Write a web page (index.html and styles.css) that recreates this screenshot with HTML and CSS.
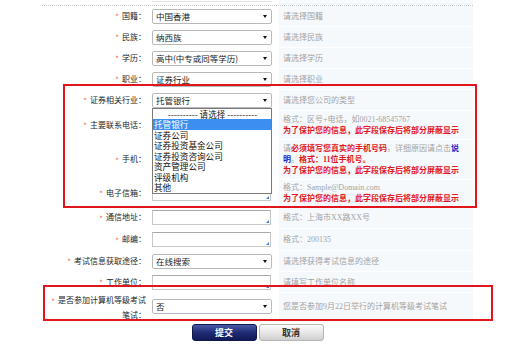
FILE: index.html
```html
<!DOCTYPE html>
<html lang="zh-CN">
<head>
<meta charset="utf-8">
<title>报名信息</title>
<link rel="stylesheet" href="styles.css">
</head>
<body>
<div class="page">
  <div class="form">
    <div class="row prev"><div class="lab"></div><div class="fld"><div class="stub"></div></div><div class="tip"></div></div>
    <div class="rows">
      <div class="row"><div class="lab"><label><i>*</i>国籍：</label></div><div class="fld"><div class="sel"><span>中国香港</span><b></b></div></div><div class="tip"><p>请选择国籍</p></div></div>
      <div class="row"><div class="lab"><label><i>*</i>民族：</label></div><div class="fld"><div class="sel"><span>纳西族</span><b></b></div></div><div class="tip"><p>请选择民族</p></div></div>
      <div class="row"><div class="lab"><label><i>*</i>学历：</label></div><div class="fld"><div class="sel"><span>高中(中专或同等学历)</span><b></b></div></div><div class="tip"><p>请选择学历</p></div></div>
      <div class="row"><div class="lab"><label><i>*</i>职业：</label></div><div class="fld"><div class="sel"><span>证券行业</span><b></b></div></div><div class="tip"><p>请选择职业</p></div></div>
      <div class="row"><div class="lab"><label><i>*</i>证券相关行业：</label></div><div class="fld"><div class="sel open"><span>托管银行</span><b></b>
        <ul class="menu">
          <li class="head">---------- 请选择 ----------</li>
          <li class="on">托管银行</li>
          <li>证券公司</li>
          <li>证券投资基金公司</li>
          <li>证券投资咨询公司</li>
          <li>资产管理公司</li>
          <li>评级机构</li>
          <li>其他</li>
        </ul></div></div><div class="tip"><p>请选择您公司的类型</p></div></div>
      <div class="row"><div class="lab"><label><i>*</i>主要联系电话：</label></div><div class="fld"><div class="inp"></div></div><div class="tip pad"><p>格式：区号+电话，如0021-68545767<br><em>为了保护您的信息，此字段保存后将部分屏蔽显示</em></p></div></div>
      <div class="row"><div class="lab"><label><i>*</i>手机：</label></div><div class="fld"><div class="inp"></div></div><div class="tip pad"><p>请<em>必须填写您真实的手机号码</em>，详细原因请点击<a href="#">说明</a>。<em>格式：11位手机号。</em><br><em>为了保护您的信息，此字段保存后将部分屏蔽显示</em></p></div></div>
      <div class="row"><div class="lab"><label><i>*</i>电子信箱：</label></div><div class="fld"><div class="inp"></div></div><div class="tip pad2"><p>格式：Sample@Domain.com<br><em>为了保护您的信息，此字段保存后将部分屏蔽显示</em></p></div></div>
      <div class="row tall"><div class="lab"><label><i>*</i>通信地址：</label></div><div class="fld"><div class="inp"></div></div><div class="tip"><p>格式：上海市XX路XX号</p></div></div>
      <div class="row tall"><div class="lab"><label><i>*</i>邮编：</label></div><div class="fld"><div class="inp"></div></div><div class="tip"><p>格式：200135</p></div></div>
      <div class="row"><div class="lab"><label><i>*</i>考试信息获取途径：</label></div><div class="fld"><div class="sel"><span>在线搜索</span><b></b></div></div><div class="tip"><p>请选择获得考试信息的途径</p></div></div>
      <div class="row"><div class="lab"><label><i>*</i>工作单位：</label></div><div class="fld"><div class="inp"></div></div><div class="tip"><p>请填写工作单位名称</p></div></div>
      <div class="row two"><div class="lab"><label><i>*</i>是否参加计算机等级考试笔试：</label></div><div class="fld"><div class="sel"><span>否</span><b></b></div></div><div class="tip"><p>您是否参加9月22日举行的计算机等级考试笔试</p></div></div>
    </div>
  </div>
  <div class="btns"><button class="btn submit">提交</button><button class="btn cancel">取消</button></div>
  <div class="mark mark-a"></div>
  <div class="mark mark-b"></div>
</div>
</body>
</html>
```

FILE: styles.css
```css
* { box-sizing: border-box; }
body {
  margin: 0;
  background: #fff;
  font: 8px/11px "Noto Sans CJK SC", "Liberation Sans", sans-serif;
  color: #222;
}
.page { position: relative; width: 512px; height: 347px; overflow: hidden; }
.form { margin-left: 42px; width: 431px; }
.rows {
  border-top: 1px dotted #c9c9c9;
  display: flex;
  flex-direction: column;
  gap: 1px;
}
.row {
  display: grid;
  grid-template-columns: 106px 131px 194px;
  min-height: 20px;
}
.row.tall { min-height: 21px; }
.row.two { min-height: 26px; }
.prev { min-height: 5px; height: 5px; }
.stub { width: 120px; height: 2px; border-bottom: 1px solid #e2e2e2; }
.lab {
  display: flex;
  align-items: center;
  justify-content: flex-end;
  text-align: right;
  padding: 0 2px 0 7px;
  color: #262626;
}
.lab label { line-height: 11px; }
.two .lab label { line-height: 13px; }
.lab i {
  font-style: normal;
  color: #ec6a6a;
  margin-right: 3px;
  vertical-align: -1.5px;
}
.fld { display: flex; align-items: center; padding-left: 4px; }
.prev .fld { align-items: flex-start; }
.tip {
  background: #f6f9fc;
  display: flex;
  align-items: center;
  padding: 0 12px 0 4px;
  color: #a3a3a3;
  font-family: "Liberation Serif", "Noto Sans CJK SC", serif;
  line-height: 11px;
}
.tip.pad { padding-top: 3px; padding-bottom: 3px; }
.tip.pad2 { padding-top: 2px; padding-bottom: 2px; }
.tip p { margin: 0; }
.tip em { font-style: normal; color: #e4161b; font-weight: 700; }
.tip a { color: #2222cc; text-decoration: none; font-weight: 700; }

.sel {
  position: relative;
  width: 120px;
  height: 15px;
  border: 1px solid #b9b9b9;
  border-radius: 2px;
  background: #fff;
  display: flex;
  align-items: center;
  justify-content: space-between;
  padding: 0 4px 0 3px;
  font-size: 8.5px;
  color: #1a1a1a;
}
.sel b {
  width: 0;
  height: 0;
  border-left: 2.5px solid transparent;
  border-right: 2.5px solid transparent;
  border-top: 3px solid #111;
}
.menu {
  position: absolute;
  left: -1px;
  top: 14px;
  width: 120px;
  margin: 0;
  padding: 0;
  list-style: none;
  background: #fff;
  border: 1px solid #7a7a7a;
  z-index: 2;
  font-size: 8.6px;
  line-height: 10.5px;
  color: #111;
}
.menu li { padding-left: 1px; white-space: nowrap; }
.menu .head { text-align: center; }
.menu .on { background: #3b8ff0; color: #fff; }

.inp {
  position: relative;
  width: 119px;
  height: 15px;
  background: #fff;
  border: 1px solid #c8c8c8;
  border-top-color: #a9a9a9;
}
.inp::after {
  content: "";
  position: absolute;
  right: 1px;
  bottom: 1px;
  border-left: 3px solid transparent;
  border-bottom: 3px solid #3d80d8;
}

.btns {
  margin: 3px 0 0 42px;
  width: 431px;
  display: flex;
  justify-content: center;
  gap: 2px;
}
.btn {
  width: 65px;
  height: 17px;
  border-radius: 3px;
  padding: 0;
  font: 700 9px/15px "Noto Sans CJK SC", sans-serif;
}
.submit {
  color: #fff;
  border: 1px solid #10184e;
  background: linear-gradient(#4b59a9, #1f2b74 50%, #121a56);
}
.cancel {
  color: #333;
  border: 1px solid #b6b6b6;
  background: linear-gradient(#fcfcfc, #e7e7e7 50%, #cecece);
}

.mark {
  position: absolute;
  border: 2px solid #e0161c;
  pointer-events: none;
}
.mark-a { left: 63px; top: 84px; width: 414px; height: 124px; }
.mark-b { left: 43px; top: 285px; width: 450px; height: 36px; }
```
